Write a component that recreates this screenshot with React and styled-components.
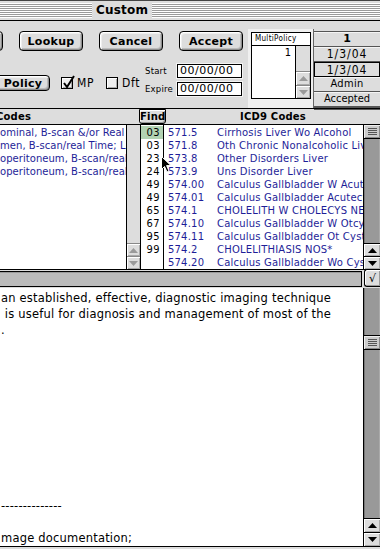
import React from "react";
import styled, { createGlobalStyle, css } from "styled-components";

const GENEVA = `"DejaVu Sans Condensed", "DejaVu Sans", sans-serif`;
const GENEVA_WIDE = `"DejaVu Sans", "Liberation Sans", sans-serif`;
const CHARCOAL = `"DejaVu Sans", "Liberation Sans", sans-serif`;
const BLUE = "#1e1e98";

const GlobalStyle = createGlobalStyle`
  html, body { margin: 0; padding: 0; background: #dddddd; overflow: hidden; }
  #root { width: 380px; height: 549px; }
  *, *::before, *::after { box-sizing: border-box; }
`;

const Window = styled.div`
  position: relative;
  width: 380px;
  height: 549px;
  overflow: hidden;
  background: #dddddd;
  display: flex;
  flex-direction: column;
  font-family: ${GENEVA};
  color: #000;
`;

/* ---------- title bar ---------- */
const TitleBar = styled.div`
  flex: none;
  height: 21px;
  border-top: 1px solid #444;
  border-bottom: 1px solid #000;
  display: grid;
  grid-template-columns: 92px auto 1fr;
  column-gap: 4px;
  align-items: center;
`;
const Stripes = styled.div`
  height: 15px;
  background: repeating-linear-gradient(to bottom, #ffffff 0 1px, #9a9a9a 1px 2px);
  border-bottom: 1px solid #fff;
`;
const Title = styled.div`
  font-family: ${CHARCOAL};
  font-weight: bold;
  font-size: 12px;
  line-height: 15px;
  letter-spacing: 0.2px;
`;

/* ---------- top panel ---------- */
const TopPanel = styled.div`
  flex: none;
  height: 87px;
  display: flex;
  align-items: flex-start;
`;
const Controls = styled.div`
  width: 248px;
  padding-top: 10px;
  display: flex;
  flex-direction: column;
  gap: 13px;
`;
const ButtonRow = styled.div`
  display: flex;
  gap: 16px;
  margin-left: -61px;
`;
const PushButton = styled.button`
  flex: none;
  width: ${(p) => p.$w || 64}px;
  height: ${(p) => p.$h || 20}px;
  margin: 0;
  margin-top: ${(p) => p.$top || 0}px;
  margin-left: ${(p) => p.$left || 0}px;
  padding: 0;
  border: 1px solid #000;
  border-radius: 4px;
  background: #dddddd;
  box-shadow: inset 1px 1px 0 #ffffff, inset -1px -1px 0 #8e8e8e,
    inset 2px 2px 0 #eeeeee, inset -2px -2px 0 #bbbbbb;
  font-family: ${CHARCOAL};
  font-weight: bold;
  font-size: 11px;
  letter-spacing: 0.3px;
  color: #000;
  line-height: 1;
`;
const OptionRow = styled.div`
  display: flex;
  align-items: flex-start;
  height: 32px;
`;
const CheckOption = styled.label`
  display: flex;
  align-items: center;
  gap: 4px;
  height: 12px;
  margin-top: 13px;
  margin-left: ${(p) => p.$left}px;
  font-size: 12px;
  letter-spacing: 0.6px;
`;
const CheckBox = styled.span`
  position: relative;
  width: 12px;
  height: 12px;
  border: 1px solid #000;
  background: #eeeeee;
  box-shadow: inset 1px 1px 0 #ffffff, inset -1px -1px 0 #aaaaaa;
  svg {
    position: absolute;
    left: 0px;
    top: -3px;
  }
`;
const DateGrid = styled.div`
  margin-left: auto;
  margin-right: 6px;
  display: grid;
  grid-template-columns: 31px 65px;
  grid-auto-rows: 14px;
  column-gap: 1px;
  row-gap: 4px;
  align-items: center;
`;
const DateLabel = styled.span`
  font-size: 9.5px;
  line-height: 10px;
  letter-spacing: 0.2px;
`;
const DateField = styled.div`
  height: 14px;
  border: 1px solid #000;
  background: #fff;
  box-shadow: 0 0 0 1px #f4f4f4;
  font-family: ${GENEVA_WIDE};
  font-size: 11px;
  line-height: 12px;
  padding-left: 2px;
  letter-spacing: 0.5px;
`;

const PolicyPanel = styled.div`
  width: 66px;
  align-self: stretch;
  margin-top: 8px;
  padding: 3px 2px 0 3px;
  background: #f0f0f0;
  border-right: 1px solid #666;
`;
const PolicyBox = styled.div`
  width: 60px;
  height: 67px;
  border: 1px solid #000;
  background: #fff;
  display: grid;
  grid-template-rows: 13px 1fr;
`;
const PolicyHeader = styled.div`
  border-bottom: 1px solid #000;
  font-size: 8px;
  line-height: 12px;
  padding-left: 3px;
  letter-spacing: 0.3px;
  white-space: nowrap;
  overflow: hidden;
`;
const PolicyBody = styled.div`
  display: grid;
  grid-template-columns: 1fr 15px;
  min-height: 0;
`;
const PolicyList = styled.div`
  font-size: 11px;
  line-height: 13px;
  text-align: right;
  padding-right: 4px;
`;

const InfoColumn = styled.div`
  width: 66px;
  margin-top: 10px;
  display: flex;
  flex-direction: column;
  border-top: 1px solid #555;
  border-bottom: 3px double #555;
`;
const InfoCell = styled.div`
  height: 15px;
  font-size: ${(p) => p.$size || 11}px;
  line-height: 14px;
  letter-spacing: ${(p) => p.$spacing || 0}px;
  text-align: center;
  border-bottom: 1px solid #555;
  box-shadow: inset 0 1px 0 #f4f4f4;
  ${(p) =>
    p.$bold &&
    css`
      font-family: ${CHARCOAL};
      font-weight: bold;
    `}
  ${(p) =>
    p.$boxed &&
    css`
      border: 1px solid #000;
      box-shadow: none;
    `}
`;

/* ---------- scroll bar parts ---------- */
const ScrollBar = styled.div`
  display: flex;
  flex-direction: column;
  border-left: 1px solid #000;
  ${(p) =>
    p.$right &&
    css`
      border-right: 1px solid #000;
    `}
  min-height: 0;
`;
const Track = styled.div`
  flex: 1;
  background: ${(p) => (p.$light ? "#dddddd" : "#999999")};
  ${(p) =>
    !p.$light &&
    css`
      box-shadow: inset 1px 0 0 #777, inset -1px 0 0 #aaa;
    `}
`;
const Thumb = styled.div`
  height: 15px;
  margin-top: ${(p) => p.$offset || 0}px;
  background: #cccccc;
  border-top: 1px solid #000;
  border-bottom: 1px solid #000;
  box-shadow: inset 1px 1px 0 #eeeeee, inset -1px -1px 0 #888888;
  display: flex;
  align-items: center;
  justify-content: center;
  ${(p) =>
    p.$flush &&
    css`
      border-top: none;
      height: 14px;
    `}
`;
const ArrowBox = styled.div`
  flex: none;
  height: ${(p) => p.$h || 13}px;
  border-top: 1px solid ${(p) => (p.$inactive ? "#888" : "#000")};
  background: #dddddd;
  box-shadow: inset 1px 1px 0 #ffffff, inset -1px -1px 0 #aaaaaa;
  display: flex;
  align-items: center;
  justify-content: center;
`;

function ScrollArrow({ dir, inactive, h }) {
  return (
    <ArrowBox $inactive={inactive} $h={h}>
      <svg width="9" height="5" viewBox="0 0 9 5">
        <polygon
          points={dir === "up" ? "0,5 4.5,0 9,5" : "0,0 9,0 4.5,5"}
          fill={inactive ? "#9a9a9a" : "#000"}
        />
      </svg>
    </ArrowBox>
  );
}

function Ridges() {
  return (
    <svg width="9" height="7" viewBox="0 0 9 7">
      {[0.5, 2.5, 4.5, 6.5].map((y) => (
        <line key={y} x1="0" y1={y} x2="9" y2={y} stroke="#555" strokeWidth="1" />
      ))}
    </svg>
  );
}

/* ---------- column header row ---------- */
const HeaderRow = styled.div`
  flex: none;
  height: 16px;
  border-top: 1px solid #000;
  display: grid;
  grid-template-columns: 139px 27px 1fr;
  align-items: center;
  font-family: ${CHARCOAL};
  font-weight: bold;
  font-size: 10px;
  letter-spacing: 0.2px;
`;
const HeaderCell = styled.div`
  white-space: nowrap;
  overflow: hidden;
  text-indent: ${(p) => p.$indent || 0}px;
  text-align: ${(p) => p.$align || "left"};
`;
const FindHeader = styled.div`
  height: 15px;
  margin-top: -1px;
  border: 1px solid #000;
  border-radius: 0 0 3px 3px;
  background: #dddddd;
  box-shadow: inset 1px 1px 0 #fff, inset -1px -1px 0 #999;
  text-align: center;
  line-height: 13px;
`;

/* ---------- lists ---------- */
const ListsArea = styled.div`
  flex: none;
  height: 145px;
  border-top: 1px solid #000;
  display: grid;
  grid-template-columns: 126px 15px 23px 199px 17px;
`;
const List = styled.div`
  background: #fff;
  padding-top: 1px;
  overflow: hidden;
  ${(p) =>
    p.$divider &&
    css`
      border-right: 1px solid #000;
    `}
`;
const Row = styled.div`
  height: 13px;
  font-family: ${GENEVA_WIDE};
  font-size: 10px;
  line-height: 13px;
  white-space: nowrap;
  overflow: hidden;
  color: ${BLUE};
  letter-spacing: ${(p) => (p.$tight ? 0.05 : 0.2)}px;
`;
const FindRow = styled(Row)`
  color: #000;
  font-family: ${GENEVA};
  font-size: 11px;
  text-align: right;
  padding-right: 3px;
  letter-spacing: 0.5px;
  background: ${(p) => (p.$hit ? "#b2d2b2" : "transparent")};
`;
const CodeRow = styled(Row)`
  display: grid;
  grid-template-columns: 49px 1fr;
  padding-left: 4px;
  span {
    overflow: hidden;
  }
`;

/* ---------- status row ---------- */
const StatusRow = styled.div`
  flex: none;
  height: 19px;
  border-top: 1px solid #000;
  display: flex;
  align-items: flex-start;
  gap: 2px;
  padding-top: 1px;
`;
const StatusField = styled.div`
  flex: 1;
  height: 16px;
  border: 1px solid #000;
  border-left: none;
  background: #bbbbbb;
  box-shadow: inset 0 1px 0 #999;
`;
const CheckButton = styled.button`
  flex: none;
  width: 16px;
  height: 18px;
  margin: -2px 0 0 0;
  padding: 0;
  border: 1px solid #000;
  border-right: none;
  border-radius: 3px 0 0 3px;
  background: #dddddd;
  box-shadow: inset 1px 1px 0 #fff, inset -1px -1px 0 #999;
  font-family: ${CHARCOAL};
  font-size: 11px;
  line-height: 1;
  color: #000;
`;

/* ---------- notes ---------- */
const NotesArea = styled.div`
  flex: none;
  height: 259px;
  border-bottom: 1px solid #000;
  background: #fff;
  display: grid;
  grid-template-columns: 1fr 17px;
`;
const NotesText = styled.div`
  padding: 2px 0 0 1px;
  font-family: ${GENEVA_WIDE};
  font-size: 11.5px;
  line-height: 16px;
  white-space: pre;
  overflow: hidden;
  letter-spacing: 0.2px;
`;

const Cursor = styled.svg`
  position: absolute;
  left: 161px;
  top: 156px;
  pointer-events: none;
`;

const leftRows = [
  "ominal, B-scan &/or Real Time",
  "men, B-scan/real Time; Limited",
  "operitoneum, B-scan/real Time",
  "operitoneum, B-scan/real Time",
];
const findRows = ["03", "03", "23", "24", "49", "49", "65", "67", "95", "99", ""];
const icdRows = [
  ["571.5", "Cirrhosis Liver Wo Alcohol"],
  ["571.8", "Oth Chronic Nonalcoholic Liver Dis"],
  ["573.8", "Other Disorders Liver"],
  ["573.9", "Uns Disorder Liver"],
  ["574.00", "Calculus Gallbladder W Acute Ch"],
  ["574.01", "Calculus Gallbladder Acutecyst Obs"],
  ["574.1", "CHOLELITH W CHOLECYS NEC*"],
  ["574.10", "Calculus Gallbladder W Otcyst"],
  ["574.11", "Calculus Gallbladder Ot Cyst Obs"],
  ["574.2", "CHOLELITHIASIS NOS*"],
  ["574.20", "Calculus Gallbladder Wo Cystitis"],
];

const notes = [
  "an established, effective, diagnostic imaging technique",
  " is useful for diagnosis and management of most of the",
  ".",
  "",
  "",
  "",
  "",
  "",
  "",
  "",
  "",
  "",
  "",
  "--------------",
  "",
  "mage documentation;",
].join("\n");

export default function App() {
  return (
    <>
      <GlobalStyle />
      <Window>
        <TitleBar>
          <Stripes />
          <Title>Custom</Title>
          <Stripes />
        </TitleBar>

        <TopPanel>
          <Controls>
            <ButtonRow>
              <PushButton aria-label="Find" />
              <PushButton>Lookup</PushButton>
              <PushButton>Cancel</PushButton>
              <PushButton>Accept</PushButton>
            </ButtonRow>
            <OptionRow>
              <PushButton $w={54} $h={16} $top={11} $left={-4}>
                Policy
              </PushButton>
              <CheckOption $left={11}>
                <CheckBox>
                  <svg width="14" height="15" viewBox="0 0 14 15">
                    <path d="M2 8 L5 12 L12 1" fill="none" stroke="#000" strokeWidth="2" />
                  </svg>
                </CheckBox>
                MP
              </CheckOption>
              <CheckOption $left={12}>
                <CheckBox />
                Dft
              </CheckOption>
              <DateGrid>
                <DateLabel>Start</DateLabel>
                <DateField>00/00/00</DateField>
                <DateLabel>Expire</DateLabel>
                <DateField>00/00/00</DateField>
              </DateGrid>
            </OptionRow>
          </Controls>

          <PolicyPanel>
            <PolicyBox>
              <PolicyHeader>MultiPolicy</PolicyHeader>
              <PolicyBody>
                <PolicyList>1</PolicyList>
                <ScrollBar>
                  <Track $light />
                  <ScrollArrow dir="up" inactive h={14} />
                  <ScrollArrow dir="down" inactive h={13} />
                </ScrollBar>
              </PolicyBody>
            </PolicyBox>
          </PolicyPanel>

          <InfoColumn>
            <InfoCell $bold $size={11}>1</InfoCell>
            <InfoCell $size={12} $spacing={1}>1/3/04</InfoCell>
            <InfoCell $boxed $size={12} $spacing={1}>1/3/04</InfoCell>
            <InfoCell $size={11} $spacing={0.3}>Admin</InfoCell>
            <InfoCell $size={11}>Accepted</InfoCell>
          </InfoColumn>
        </TopPanel>

        <HeaderRow>
          <HeaderCell $indent={-4}>Codes</HeaderCell>
          <FindHeader>Find</FindHeader>
          <HeaderCell $align="center">ICD9 Codes</HeaderCell>
        </HeaderRow>

        <ListsArea>
          <List>
            {leftRows.map((t, i) => (
              <Row key={i} $tight>
                {t}
              </Row>
            ))}
          </List>
          <ScrollBar $right>
            <Track $light />
            <ScrollArrow dir="up" inactive />
            <ScrollArrow dir="down" inactive />
          </ScrollBar>
          <List $divider>
            {findRows.map((t, i) => (
              <FindRow key={i} $hit={i === 0}>
                {t}
              </FindRow>
            ))}
          </List>
          <List>
            {icdRows.map(([c, d]) => (
              <CodeRow key={c}>
                <span>{c}</span>
                <span>{d}</span>
              </CodeRow>
            ))}
          </List>
          <ScrollBar>
            <Thumb $flush>
              <Ridges />
            </Thumb>
            <Track />
            <ScrollArrow dir="up" />
            <ScrollArrow dir="down" />
          </ScrollBar>
        </ListsArea>

        <StatusRow>
          <StatusField />
          <CheckButton>√</CheckButton>
        </StatusRow>

        <NotesArea>
          <NotesText>{notes}</NotesText>
          <ScrollBar>
            <Track>
              <Thumb $offset={47}>
                <Ridges />
              </Thumb>
            </Track>
            <ScrollArrow dir="up" h={14} />
            <ScrollArrow dir="down" h={14} />
          </ScrollBar>
        </NotesArea>

        <Cursor width="11" height="17" viewBox="0 0 11 17">
          <path
            d="M0.5 0.5 L0.5 13.5 L3.5 10.5 L6 16 L8 15 L5.6 9.6 L10 9.6 Z"
            fill="#000"
            stroke="#fff"
            strokeWidth="1"
          />
        </Cursor>
      </Window>
    </>
  );
}
